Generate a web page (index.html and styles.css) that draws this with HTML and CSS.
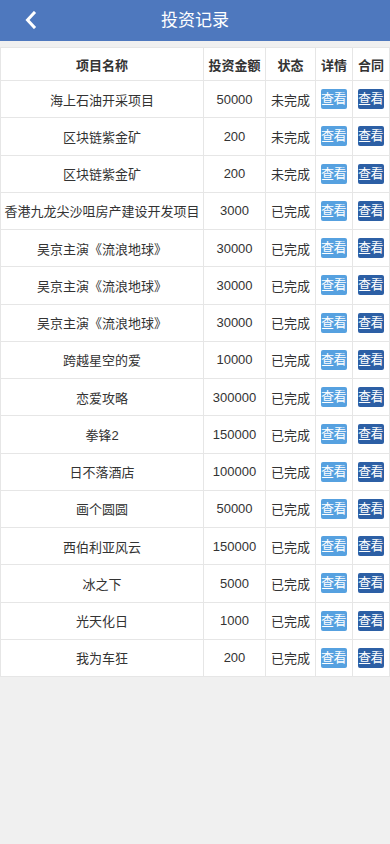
FILE: index.html
```html
<!DOCTYPE html>
<html lang="zh">
<head>
<meta charset="utf-8">
<meta name="viewport" content="width=device-width, initial-scale=1">
<title>投资记录</title>
<link rel="stylesheet" href="styles.css">
</head>
<body>
<header class="topbar">
  <a class="back" href="#" aria-label="返回">
    <svg width="14" height="18" viewBox="0 0 14 18"><path d="M10 2 L3.5 9 L10 16" fill="none" stroke="#fff" stroke-width="3" stroke-linecap="square"/></svg>
  </a>
  <h1 class="title">投资记录</h1>
</header>
<main class="content">
  <table class="records">
    <colgroup>
      <col class="c-name"><col class="c-amt"><col class="c-st"><col class="c-btn"><col class="c-btn">
    </colgroup>
    <thead>
      <tr><th>项目名称</th><th>投资金额</th><th>状态</th><th>详情</th><th>合同</th></tr>
    </thead>
    <tbody>
      <tr><td>海上石油开采项目</td><td>50000</td><td>未完成</td><td><span class="btn btn-light">查看</span></td><td><span class="btn btn-dark">查看</span></td></tr>
      <tr><td>区块链紫金矿</td><td>200</td><td>未完成</td><td><span class="btn btn-light">查看</span></td><td><span class="btn btn-dark">查看</span></td></tr>
      <tr><td>区块链紫金矿</td><td>200</td><td>未完成</td><td><span class="btn btn-light">查看</span></td><td><span class="btn btn-dark">查看</span></td></tr>
      <tr><td>香港九龙尖沙咀房产建设开发项目</td><td>3000</td><td>已完成</td><td><span class="btn btn-light">查看</span></td><td><span class="btn btn-dark">查看</span></td></tr>
      <tr><td>吴京主演《流浪地球》</td><td>30000</td><td>已完成</td><td><span class="btn btn-light">查看</span></td><td><span class="btn btn-dark">查看</span></td></tr>
      <tr><td>吴京主演《流浪地球》</td><td>30000</td><td>已完成</td><td><span class="btn btn-light">查看</span></td><td><span class="btn btn-dark">查看</span></td></tr>
      <tr><td>吴京主演《流浪地球》</td><td>30000</td><td>已完成</td><td><span class="btn btn-light">查看</span></td><td><span class="btn btn-dark">查看</span></td></tr>
      <tr><td>跨越星空的爱</td><td>10000</td><td>已完成</td><td><span class="btn btn-light">查看</span></td><td><span class="btn btn-dark">查看</span></td></tr>
      <tr><td>恋爱攻略</td><td>300000</td><td>已完成</td><td><span class="btn btn-light">查看</span></td><td><span class="btn btn-dark">查看</span></td></tr>
      <tr><td>拳锋2</td><td>150000</td><td>已完成</td><td><span class="btn btn-light">查看</span></td><td><span class="btn btn-dark">查看</span></td></tr>
      <tr><td>日不落酒店</td><td>100000</td><td>已完成</td><td><span class="btn btn-light">查看</span></td><td><span class="btn btn-dark">查看</span></td></tr>
      <tr><td>画个圆圆</td><td>50000</td><td>已完成</td><td><span class="btn btn-light">查看</span></td><td><span class="btn btn-dark">查看</span></td></tr>
      <tr><td>西伯利亚风云</td><td>150000</td><td>已完成</td><td><span class="btn btn-light">查看</span></td><td><span class="btn btn-dark">查看</span></td></tr>
      <tr><td>冰之下</td><td>5000</td><td>已完成</td><td><span class="btn btn-light">查看</span></td><td><span class="btn btn-dark">查看</span></td></tr>
      <tr><td>光天化日</td><td>1000</td><td>已完成</td><td><span class="btn btn-light">查看</span></td><td><span class="btn btn-dark">查看</span></td></tr>
      <tr><td>我为车狂</td><td>200</td><td>已完成</td><td><span class="btn btn-light">查看</span></td><td><span class="btn btn-dark">查看</span></td></tr>
    </tbody>
  </table>
</main>
</body>
</html>
```

FILE: styles.css
```css
* { box-sizing: border-box; }
html, body {
  margin: 0;
  padding: 0;
  background: #f0f0f0;
  font-family: "Liberation Sans", "Noto Sans CJK SC", sans-serif;
  color: #333;
}
.topbar {
  position: relative;
  height: 41px;
  background: #4e78be;
  display: flex;
  align-items: center;
  justify-content: center;
}
.back {
  position: absolute;
  left: 24px;
  top: 11px;
  display: block;
  width: 14px;
  height: 18px;
}
.back svg { display: block; }
.title {
  margin: 0;
  font-size: 17px;
  font-weight: normal;
  color: #fff;
  line-height: 41px;
}
.content {
  padding-top: 6px;
}
.records {
  width: 390px;
  border-collapse: collapse;
  table-layout: fixed;
  background: #fff;
  font-size: 13px;
}
.c-name { width: 203px; }
.c-amt { width: 62px; }
.c-st { width: 50px; }
.c-btn { width: 37px; }
.records th,
.records td {
  border: 1px solid #e6e6e6;
  text-align: center;
  padding: 0;
  white-space: nowrap;
}
.records th {
  height: 33px;
  font-weight: bold;
  color: #333;
}
.records td {
  height: 37.25px;
  color: #333;
}
.btn {
  display: inline-block;
  width: 26px;
  height: 20px;
  line-height: 20px;
  border-radius: 2px;
  color: #fff;
  font-size: 13px;
  vertical-align: middle;
  overflow: hidden;
  letter-spacing: -0.5px;
  text-indent: -1px;
}
.btn-light { background: #56a1e0; }
.btn-dark { background: #2c5fa5; }
```
